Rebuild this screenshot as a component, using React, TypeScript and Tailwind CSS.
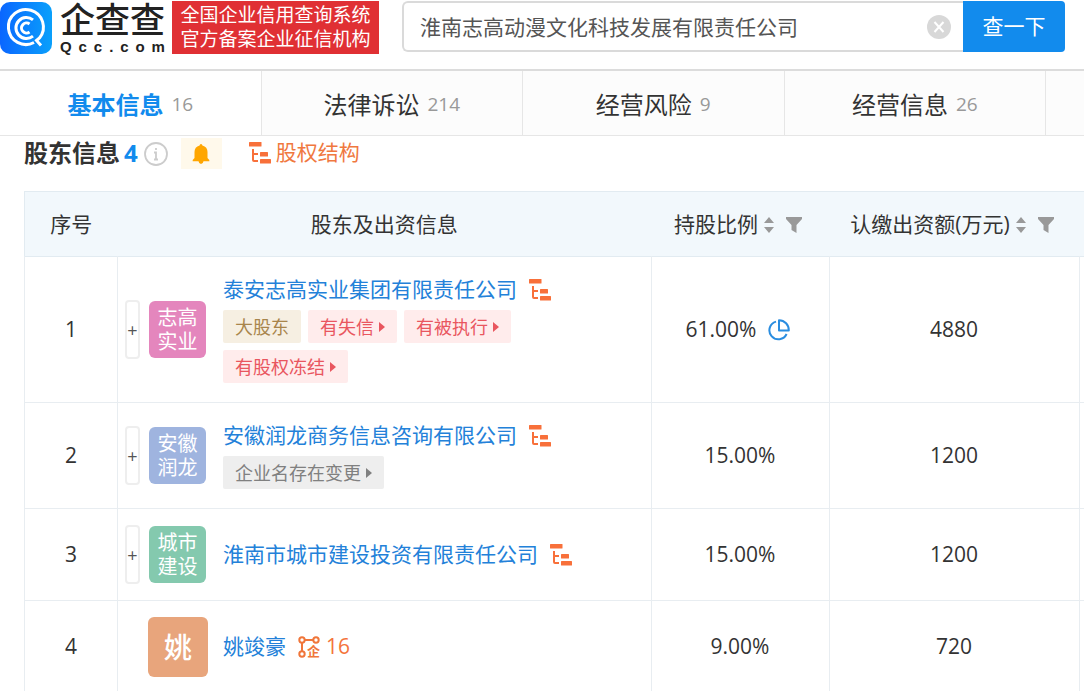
import { useState } from "react";

type Tag = { text: string; tone: "gold" | "red" | "gray" };

type Holder = {
  name: string;
  avatar: string[];
  color: string;
  tags: Tag[];
  ratio: string;
  amount: string;
  rowHeight: string;
  person?: boolean;
  related?: number;
  chart?: boolean;
};

const tabs = [
  { label: "基本信息", count: 16 },
  { label: "法律诉讼", count: 214 },
  { label: "经营风险", count: 9 },
  { label: "经营信息", count: 26 },
];

const holders: Holder[] = [
  {
    name: "泰安志高实业集团有限责任公司",
    avatar: ["志高", "实业"],
    color: "bg-[#e486bd]",
    tags: [
      { text: "大股东", tone: "gold" },
      { text: "有失信", tone: "red" },
      { text: "有被执行", tone: "red" },
      { text: "有股权冻结", tone: "red" },
    ],
    ratio: "61.00%",
    amount: "4880",
    rowHeight: "h-[146px]",
    chart: true,
  },
  {
    name: "安徽润龙商务信息咨询有限公司",
    avatar: ["安徽", "润龙"],
    color: "bg-[#9fb4df]",
    tags: [{ text: "企业名存在变更", tone: "gray" }],
    ratio: "15.00%",
    amount: "1200",
    rowHeight: "h-[106px]",
  },
  {
    name: "淮南市城市建设投资有限责任公司",
    avatar: ["城市", "建设"],
    color: "bg-[#84c9ae]",
    tags: [],
    ratio: "15.00%",
    amount: "1200",
    rowHeight: "h-[92px]",
  },
  {
    name: "姚竣豪",
    avatar: ["姚"],
    color: "bg-[#e8a57c]",
    tags: [],
    ratio: "9.00%",
    amount: "720",
    rowHeight: "h-[92px]",
    person: true,
    related: 16,
  },
];

const toneClass = {
  gold: "bg-[#f6efe2] text-[#a8854c]",
  red: "bg-[#ffecec] text-[#e9565f]",
  gray: "bg-[#eeeeee] text-[#808080]",
};

function LogoMark() {
  return (
    <svg viewBox="0 0 52 52" className="size-[52px] shrink-0" fill="none">
      <defs>
        <linearGradient id="mark" x1="0" y1="0" x2="1" y2="0">
          <stop offset="0" stopColor="#0a66ff" />
          <stop offset="1" stopColor="#0aa0fb" />
        </linearGradient>
      </defs>
      <rect width="52" height="52" rx="10" fill="url(#mark)" />
      <g stroke="#fff" strokeWidth="3">
        <path d="M34 40.500A17.500 17.500 0 1 1 39.500 36L36.500 38.500L41 43.500" />
        <path d="M33 17.800A10.500 10.500 0 1 0 33 34.200" />
        <path d="M29.500 22A5 5 0 1 0 29.500 30" />
      </g>
    </svg>
  );
}

function TreeIcon() {
  return (
    <svg viewBox="0 0 22 22" className="size-[22px] shrink-0" fill="#f8703a">
      <rect width="12.500" height="4.500" rx="0.5" />
      <rect x="11" y="10" width="8" height="4.500" rx="0.5" />
      <rect x="11" y="17" width="11" height="4.500" rx="0.5" />
      <path d="M4 7v11q0 1 1 1h4M4 12h5" fill="none" stroke="#f8703a" strokeWidth="2" />
    </svg>
  );
}

function RelationIcon() {
  return (
    <svg viewBox="0 0 22 22" className="size-[22px] shrink-0 overflow-visible" fill="none">
      <g stroke="#f0763a" strokeWidth="2">
        <circle cx="4" cy="4" r="2.700" />
        <circle cx="18" cy="4" r="2.700" />
        <circle cx="4" cy="18" r="2.700" />
        <path d="M6.700 4h8.600M4 6.700v8.600" />
      </g>
      <text
        x="9"
        y="20"
        fill="#f0763a"
        className="font-['Liberation_Sans','Noto_Sans_CJK_SC',sans-serif] text-[13px] font-bold"
      >
        企
      </text>
    </svg>
  );
}

function PieIcon() {
  return (
    <svg
      viewBox="0 0 22 22"
      className="size-[22px]"
      fill="none"
      stroke="#2a8de0"
      strokeWidth="2"
      strokeLinejoin="round"
    >
      <path d="M8 2.600A9 9 0 1 0 18.600 15" />
      <path d="M11 1.200V11.500H20.800A9.900 9.900 0 0 0 11 1.200Z" />
    </svg>
  );
}

function ColumnTools({ label }: { label: string }) {
  return (
    <>
      <button type="button" aria-label={`${label}排序`} className="ml-1.5">
        <svg viewBox="0 0 10 16" className="h-4 w-2.5" fill="#999">
          <path d="M5 0L10 6H0ZM5 16L0 10H10Z" />
        </svg>
      </button>
      <button type="button" aria-label={`${label}筛选`} className="ml-3">
        <svg viewBox="0 0 16 16" className="size-4" fill="#999">
          <path d="M0 0H16V2L10.500 8V16L5.500 13V8L0 2Z" />
        </svg>
      </button>
    </>
  );
}

function Header() {
  const [keyword, setKeyword] = useState("淮南志高动漫文化科技发展有限责任公司");

  return (
    <header className="flex h-[71px] items-start border-b-2 border-[#dcdcdc] pt-px pr-[19px]">
      <a href="#" aria-label="企查查" className="flex shrink-0 pt-px">
        <LogoMark />
        <span className="ml-2 w-[105px] font-['Liberation_Sans','Noto_Sans_CJK_SC',sans-serif] text-[#222]">
          <span className="block text-[35px] leading-[38px] font-medium">企查查</span>
          <span className="flex justify-between text-[15px] leading-[14px] font-bold">
            {"Qcc.com".split("").map((letter, index) => (
              <span key={index}>{letter}</span>
            ))}
          </span>
        </span>
      </a>
      <p className="ml-[7px] h-[53px] w-[207px] shrink-0 bg-[#e03034] pt-0.5 text-center text-[19px] leading-6 text-white">
        全国企业信用查询系统
        <br />
        官方备案企业征信机构
      </p>
      <form className="ml-[23px] flex flex-1" onSubmit={(e) => e.preventDefault()}>
        <div className="relative flex-1">
          <input
            type="text"
            aria-label="搜索企业"
            value={keyword}
            onChange={(e) => setKeyword(e.target.value)}
            className="h-[51px] w-full rounded-l-md border-2 border-r-0 border-[#dadada] pr-12 pb-0.5 pl-4 text-[21px] text-[#555] outline-none"
          />
          <button
            type="button"
            aria-label="清空"
            onClick={() => setKeyword("")}
            className="absolute top-3.5 right-3 size-6 rounded-full bg-[#d8d8d8]"
          >
            <svg viewBox="0 0 24 24" className="size-6" stroke="#fff" strokeWidth="2">
              <path d="M7.500 7L16.500 17M16.500 7L7.500 17" />
            </svg>
          </button>
        </div>
        <button
          type="submit"
          className="h-[51px] w-[102px] rounded-r bg-[#128bed] text-[21px] text-white"
        >
          查一下
        </button>
      </form>
    </header>
  );
}

function HolderRow({ holder, index }: { holder: Holder; index: number }) {
  return (
    <tr className={`${holder.rowHeight} border-b border-[#e8edf1]`}>
      <td className="border-x border-[#e8edf1] text-center">{index + 1}</td>
      <td className="border-r border-[#e8edf1] pr-3 pl-[7px]">
        <div className="flex items-center">
          {holder.person ? (
            <span
              className={`ml-[23px] flex size-[60px] shrink-0 items-center justify-center rounded-md text-[28px] font-medium text-white ${holder.color}`}
            >
              {holder.avatar[0]}
            </span>
          ) : (
            <>
              <button
                type="button"
                aria-label={`展开${holder.name}`}
                className="flex h-[59px] w-[15px] shrink-0 items-center justify-center rounded-sm border-2 border-[#eee] bg-white text-lg text-[#555]"
              >
                +
              </button>
              <span
                className={`ml-[9px] flex size-[57px] shrink-0 flex-col justify-center rounded-md text-center text-[20px] leading-6 text-white ${holder.color}`}
              >
                {holder.avatar.map((line) => (
                  <span key={line}>{line}</span>
                ))}
              </span>
            </>
          )}
          <div className={holder.person ? "ml-[15px]" : "ml-[17px]"}>
            <div className="flex h-7 items-center">
              <a href="#" className="text-[#2381d9]">
                {holder.name}
              </a>
              {holder.person ? (
                <a href="#" className="ml-3 flex items-center gap-1.5 text-[#f4743b]">
                  <RelationIcon />
                  {holder.related}
                </a>
              ) : (
                <a href="#" aria-label="股权结构" className="ml-3">
                  <TreeIcon />
                </a>
              )}
            </div>
            {holder.tags.length > 0 && (
              <div className="mt-1.5 flex flex-wrap gap-[7px]">
                {holder.tags.map((tag) => (
                  <span
                    key={tag.text}
                    className={`flex h-[33px] items-center rounded-xs px-3 text-lg ${toneClass[tag.tone]}`}
                  >
                    {tag.text}
                    {tag.tone !== "gold" && (
                      <svg viewBox="0 0 6 10" className="ml-[5px] h-2.5 w-1.5" fill="currentColor">
                        <path d="M0 0L6 5L0 10Z" />
                      </svg>
                    )}
                  </span>
                ))}
              </div>
            )}
          </div>
        </div>
      </td>
      <td className="border-r border-[#e8edf1]">
        <div className={`flex items-center justify-center gap-3 ${holder.chart ? "pr-1" : ""}`}>
          {holder.ratio}
          {holder.chart && <PieIcon />}
        </div>
      </td>
      <td className="border-r border-[#e8edf1] text-center">{holder.amount}</td>
      <td />
    </tr>
  );
}

export default function App() {
  const [active, setActive] = useState(0);

  return (
    <div className="overflow-hidden bg-white font-['Open_Sans','Noto_Sans_CJK_SC',sans-serif] text-[21px] text-[#333]">
      <Header />
      <nav className="flex h-[65px]">
        {tabs.map((tab, index) => (
          <button
            key={tab.label}
            type="button"
            onClick={() => setActive(index)}
            className={`flex flex-[261] items-center justify-center gap-2 border-r border-b border-[#e6e6e6] pt-1 text-2xl ${
              index === active ? "bg-white font-bold text-[#128bed]" : "bg-[#fcfcfc]"
            }`}
          >
            {tab.label}
            <span className="text-[19px] font-normal text-[#999]">{tab.count}</span>
          </button>
        ))}
        <div className="flex-[38] border-b border-[#e6e6e6] bg-[#fcfcfc]" />
      </nav>
      <main className="pl-6">
        <div className="flex h-[55px] items-start">
          <h2 className="flex h-[34px] items-center gap-1 text-2xl font-bold">
            股东信息
            <span className="text-[#128bed]">4</span>
          </h2>
          <button type="button" aria-label="说明" className="mt-1.5 ml-1.5">
            <svg viewBox="0 0 24 24" className="size-6" fill="none" stroke="#ccc" strokeWidth="1.800">
              <circle cx="12" cy="12" r="11" />
              <path d="M12 6v2M10 10.500h2v7M10 17.500h4" />
            </svg>
          </button>
          <button
            type="button"
            aria-label="监控"
            className="mt-0.5 ml-[13px] flex h-[31px] w-[41px] items-center justify-center bg-[#fff9eb]"
          >
            <svg viewBox="0 0 18 20" className="h-5 w-[18px]" fill="#ffa600">
              <path d="M9 0q1.300 0 1.400 1.500Q15.500 2.800 15.500 8v6l1.800 2v1.200H11.500Q11 20 9 20T6.500 17.200H.700V16l1.800-2V8Q2.500 2.800 7.600 1.500 7.700 0 9 0Z" />
            </svg>
          </button>
          <a href="#" className="ml-[27px] flex h-[34px] items-center gap-[5px] text-[#f0783f]">
            <TreeIcon />
            股权结构
          </a>
        </div>
        <table className="w-full table-fixed border-collapse">
          <colgroup>
            <col className="w-[93px]" />
            <col />
            <col className="w-[178px]" />
            <col className="w-[250px]" />
            <col className="w-[5px]" />
          </colgroup>
          <thead>
            <tr className="h-[65px] border border-r-0 border-[#e2ebf1] bg-[#f2f8fc]">
              <th className="pt-0.5 font-normal">序号</th>
              <th className="pt-0.5 font-normal">股东及出资信息</th>
              <th className="pt-0.5 pr-1 font-normal">
                <div className="flex items-center justify-center">
                  持股比例
                  <ColumnTools label="持股比例" />
                </div>
              </th>
              <th className="pt-0.5 pr-1 font-normal">
                <div className="flex items-center justify-center">
                  认缴出资额(万元)
                  <ColumnTools label="认缴出资额" />
                </div>
              </th>
              <th />
            </tr>
          </thead>
          <tbody>
            {holders.map((holder, index) => (
              <HolderRow key={holder.name} holder={holder} index={index} />
            ))}
          </tbody>
        </table>
      </main>
    </div>
  );
}
